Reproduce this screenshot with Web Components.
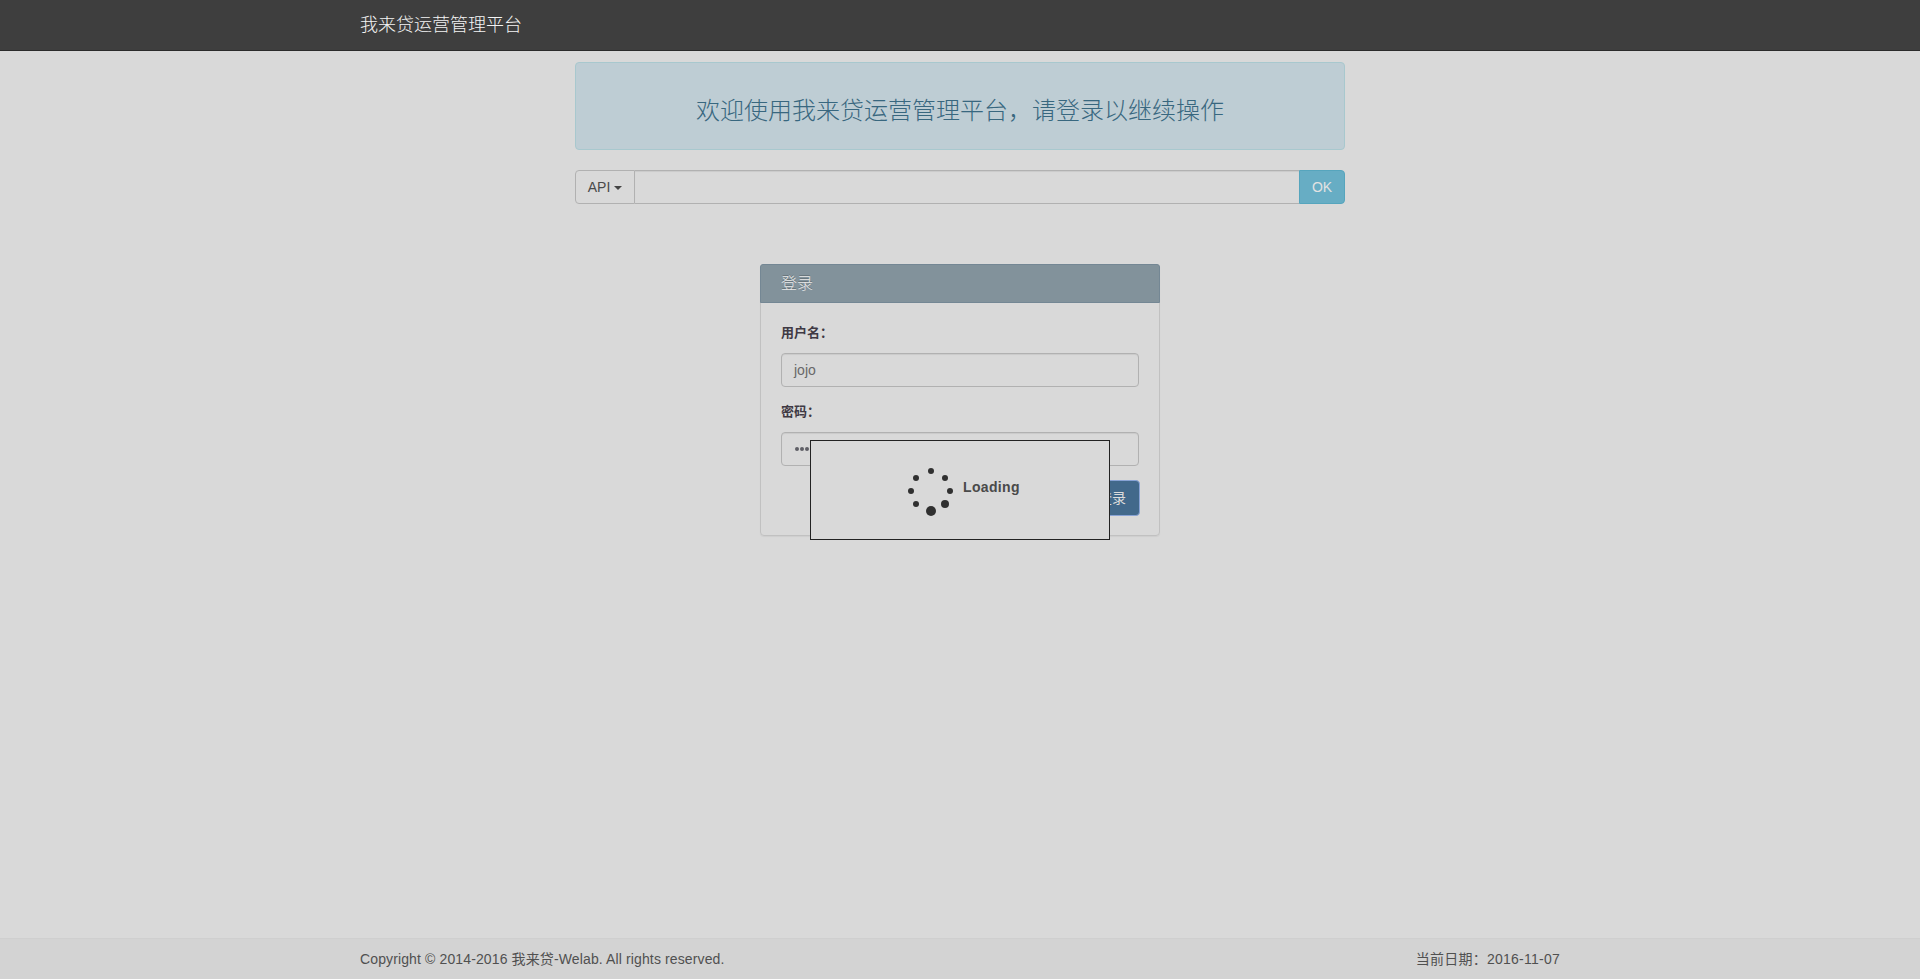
<!DOCTYPE html>
<html lang="zh-CN">
<head>
<meta charset="utf-8">
<title>我来贷运营管理平台</title>
<style>
html,body{margin:0;height:100%}
body{background:#d9d9d9;color:#4a4a4a;font:14px/20px "Liberation Sans","Noto Sans CJK SC",sans-serif;overflow:hidden}
</style>
</head>
<body>
<ops-app></ops-app>
<script>
const define = (name, html) => customElements.define(name, class extends HTMLElement {
  constructor() {
    super();
    const t = document.createElement('template');
    t.innerHTML = '<style>*{box-sizing:border-box}</style>' + html;
    this.attachShadow({mode: 'open'}).append(t.content.cloneNode(true));
  }
});

define('ops-navbar', `<style>
:host{display:block;height:51px;box-sizing:border-box;background:#3e3e3e;border-bottom:1px solid #2b2b2b}
div{width:1200px;margin:auto;font-size:18px;font-weight:300;line-height:20px;padding-top:15px;color:#f4f4f4}
</style><div><slot></slot></div>`);

define('ops-alert', `<style>
:host{display:flex;box-sizing:border-box;height:88px;border:1px solid #a8c8ce;border-radius:4px;background:#becdd4;color:#38677f;
justify-content:center;align-items:center;padding-top:10px;font-size:24px;font-weight:300;line-height:26px;white-space:nowrap}
</style><slot></slot>`);

define('ops-api-bar', `<style>
:host{display:flex;height:34px;margin-top:20px}
.api{display:flex;align-items:center;justify-content:center;width:60px;border:1px solid #b1b1b1;border-radius:4px 0 0 4px;padding-bottom:1px}
.api i{border:4px solid transparent;border-top-color:#444;border-bottom:0;margin:2px 0 0 4px}
.field{flex:1;border:1px solid #b1b1b1;border-left:0;border-right:0;box-shadow:inset 0 1px 1px rgba(0,0,0,.07)}
.ok{display:flex;align-items:center;justify-content:center;width:46px;border:1px solid #56a5bd;border-radius:0 4px 4px 0;background:#67adc4;color:#e2e2e2}
</style><div class="api">API<i></i></div><div class="field"></div><div class="ok">OK</div>`);

define('ops-field', `<style>
:host{display:block}
.label{font-size:13px;font-weight:700;line-height:20px;height:30px;color:#3f3944}
.box{height:34px;border:1px solid #b1b1b1;border-radius:4px;padding:6px 12px;color:#686868;box-shadow:inset 0 1px 1px rgba(0,0,0,.07)}
</style><div class="label"><slot name="label"></slot></div><div class="box"><slot></slot></div>`);

define('ops-login-panel', `<style>
:host{display:block;box-sizing:border-box;width:400px;height:272px;margin:60px auto 0;border:1px solid #c1c1c1;border-radius:4px;box-shadow:0 1px 1px rgba(0,0,0,.05)}
header{height:39px;margin:-1px -1px 0;border:1px solid #748794;border-radius:3px 3px 0 0;background:#82929b;color:#e8e8e8;font-size:16px;font-weight:300;line-height:18px;padding:10px 20px 8px;text-shadow:0 -1px 0 rgba(0,0,0,.25)}
.body{display:flex;flex-direction:column;padding:20px 20px 0}
ops-field + ops-field{margin-top:15px}
.dots{display:flex;gap:1px;padding:8px 0 0 1px}
.dots b{width:4px;height:4px;border-radius:2px;background:#5f5f66}
button{align-self:flex-end;width:54px;height:36px;margin:14px -1px 0 0;padding:0 2px 0 0;border:1px solid #88a3d5;border-radius:4px;background:#42698b;color:#dcdcdc;font:14px/20px "Liberation Sans","Noto Sans CJK SC",sans-serif}
</style><header>登录</header><div class="body">
<ops-field><span slot="label">用户名：</span>jojo</ops-field>
<ops-field><span slot="label">密码：</span><span class="dots"><b></b><b></b><b></b><b></b><b></b><b></b></span></ops-field>
<button>登录</button></div>`);

define('ops-loading', `<style>
:host{position:absolute;left:50%;top:440px;width:300px;height:100px;margin-left:-150px;box-sizing:border-box;background:#d9d9d9;border:1px solid #222;
display:flex;padding:20px 0 0 95px;font-weight:700;letter-spacing:.35px}
svg{width:50px;height:60px;flex:none;fill:#303030}
span{padding:16px 0 0 7px}
</style><svg viewBox="906 461 50 60"><circle cx="931" cy="471" r="3"/><circle cx="916" cy="478" r="3"/><circle cx="945" cy="478" r="3"/><circle cx="911" cy="491" r="3"/><circle cx="950" cy="491" r="3"/><circle cx="916" cy="504" r="3"/><circle cx="945" cy="504" r="4"/><circle cx="931" cy="511" r="5"/></svg><span>Loading</span>`);

define('ops-footer', `<style>
:host{display:block;height:41px;box-sizing:border-box;border-top:1px solid #cfcfcf;background:#d3d3d3}
div{display:flex;justify-content:space-between;width:1200px;margin:auto;padding-top:10px;letter-spacing:.125px;color:#505050}
::slotted(:last-child){letter-spacing:.25px}
</style><div><slot></slot></div>`);

define('ops-app', `<style>
:host{display:flex;flex-direction:column;height:100vh}
main{flex:1;width:770px;margin:0 auto;padding-top:11px}
</style><ops-navbar>我来贷运营管理平台</ops-navbar>
<main><ops-alert>欢迎使用我来贷运营管理平台，请登录以继续操作</ops-alert><ops-api-bar></ops-api-bar><ops-login-panel></ops-login-panel></main>
<ops-footer><span>Copyright © 2014-2016 我来贷-Welab. All rights reserved.</span><span>当前日期：2016-11-07</span></ops-footer>
<ops-loading></ops-loading>`);
</script>
</body>
</html>
